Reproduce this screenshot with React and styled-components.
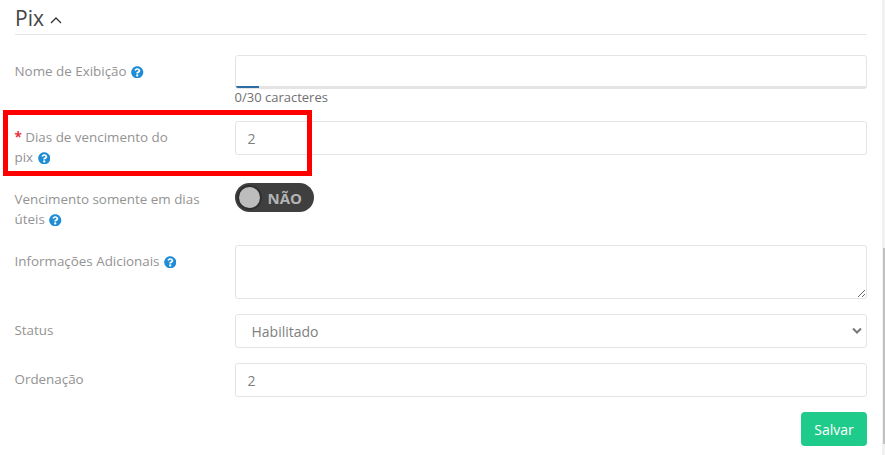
import React from 'react'
import styled, { createGlobalStyle } from 'styled-components'

const GlobalStyle = createGlobalStyle`
    html, body {
        margin: 0;
        padding: 0;
        background: #fff;
        overflow: hidden;
    }
    * {
        box-sizing: border-box;
    }
`

function HelpIcon() {
    return (
        <Help viewBox="0 0 512 512" aria-hidden="true">
            <path d="M504 256c0 137-111 248-248 248S8 393 8 256 119 8 256 8s248 111 248 248zM262.700 90c-54.500 0-89.300 23-116.500 63.800-3.500 5.300-2.400 12.400 2.700 16.300l34.700 26.300c5.200 3.900 12.600 3 16.700-2.100 17.900-22.700 30.100-35.800 57.300-35.800 20.400 0 45.700 13.100 45.700 32.900 0 15-12.400 22.700-32.500 34-23.500 13.200-54.600 29.600-54.600 70.600V300c0 6.600 5.400 12 12 12h56c6.600 0 12-5.400 12-12v-1.300c0-28.400 83-29.600 83-106.700 0-58-60.200-102-116.500-102zM256 338c-25.400 0-46 20.600-46 46 0 25.400 20.600 46 46 46s46-20.600 46-46c0-25.400-20.600-46-46-46z" />
        </Help>
    )
}

function App() {
    return (
        <Page>
            <GlobalStyle />
            <Panel>
                <Title>
                    Pix
                    <Chevron viewBox="0 0 12 8" aria-hidden="true">
                        <path d="M1 7L6 2l5 5" />
                    </Chevron>
                </Title>

                <Row>
                    <Label>Nome de Exibição <HelpIcon /></Label>
                    <Field>
                        <TextInput type="text" underlined />
                        <Counter>0/30 caracteres</Counter>
                    </Field>
                </Row>

                <Row gap={16}>
                    <Label><Star>*</Star> Dias de vencimento do<br />pix <HelpIcon /></Label>
                    <Field>
                        <TextInput type="text" defaultValue="2" />
                    </Field>
                </Row>

                <Row gap={16}>
                    <Label>Vencimento somente em dias<br />úteis <HelpIcon /></Label>
                    <Field>
                        <Toggle>
                            <Knob />
                            <ToggleText>NÃO</ToggleText>
                        </Toggle>
                    </Field>
                </Row>

                <Row gap={16}>
                    <Label>Informações Adicionais <HelpIcon /></Label>
                    <Field>
                        <TextArea />
                    </Field>
                </Row>

                <Row gap={15}>
                    <Label>Status</Label>
                    <Field>
                        <SelectWrap>
                            <SelectBox defaultValue="Habilitado">
                                <option>Habilitado</option>
                            </SelectBox>
                            <SelectArrow viewBox="0 0 10 7" aria-hidden="true">
                                <path d="M1 1.500l4 4 4-4" />
                            </SelectArrow>
                        </SelectWrap>
                    </Field>
                </Row>

                <Row gap={15}>
                    <Label>Ordenação</Label>
                    <Field>
                        <TextInput type="text" defaultValue="2" />
                    </Field>
                </Row>

                <Footer>
                    <SaveButton type="button">Salvar</SaveButton>
                </Footer>
            </Panel>

            <Highlight />
            <ScrollTrack>
                <ScrollThumb />
            </ScrollTrack>
        </Page>
    )
}

export default App

const Page = styled.div`
    position: relative;
    width: 885px;
    height: 455px;
    overflow: hidden;
    background: #fff;
    font-family: 'Open Sans', sans-serif;
    color: #888;
`
const Panel = styled.div`
    display: flex;
    flex-direction: column;
    padding: 0 18px 0 15px;
`
const Title = styled.div`
    display: flex;
    align-items: center;
    gap: 6px;
    height: 35px;
    padding-top: 2px;
    border-bottom: 1px solid #e6e6e6;
    font-size: 21px;
    color: #444;
`
const Chevron = styled.svg`
    width: 12px;
    height: 8px;
    margin-top: 3px;
    fill: none;
    stroke: #333;
    stroke-width: 1.3;
`
const Row = styled.div`
    display: flex;
    margin-top: ${({gap}) => gap ?? 20}px;
`
const Label = styled.div`
    width: 220px;
    flex: none;
    margin-left: -0.5px;
    padding-top: 6px;
    font-size: 13.4px;
    line-height: 20px;
    color: #939393;
`
const Help = styled.svg`
    display: inline-block;
    width: 12.500px;
    height: 12.500px;
    margin-left: 1px;
    vertical-align: -2px;
    fill: #1f8dd6;
`
const Star = styled.span`
    color: #e8313c;
    font-weight: 700;
`
const Field = styled.div`
    flex: 1;
    min-width: 0;
`
const TextInput = styled.input`
    display: block;
    width: 100%;
    height: 34px;
    padding: 0 16px 0 12px;
    border: 1px solid #e4e4e4;
    border-radius: 3px;
    outline: none;
    background: ${({underlined}) => underlined
        ? 'linear-gradient(#2e6da4, #2e6da4) left bottom / 23px 2px no-repeat, linear-gradient(#e4e4e4, #e4e4e4) left bottom / 100% 2px no-repeat, #fff'
        : '#fff'};
    font-family: inherit;
    font-size: 14px;
    color: #808080;
`
const Counter = styled.div`
    font-size: 13px;
    line-height: 16px;
    color: #707070;
`
const Toggle = styled.div`
    display: flex;
    align-items: center;
    width: 79px;
    height: 29px;
    padding: 0 4px;
    border-radius: 15px;
    background: #3f3f3f;
`
const Knob = styled.span`
    width: 21px;
    height: 21px;
    border-radius: 50%;
    background: #bdbdbd;
    box-shadow: 0 0 0 2px #2f2f2f;
`
const ToggleText = styled.span`
    margin-left: 8px;
    font-size: 15px;
    font-weight: 700;
    color: #b4b4b4;
`
const TextArea = styled.textarea`
    display: block;
    width: 100%;
    height: 54px;
    border: 1px solid #e4e4e4;
    border-radius: 3px;
    outline: none;
    background: #fff;
`
const SelectWrap = styled.div`
    position: relative;
`
const SelectBox = styled.select`
    display: block;
    width: 100%;
    height: 34px;
    padding: 0 16px;
    border: 1px solid #e4e4e4;
    border-radius: 3px;
    outline: none;
    appearance: none;
    background: #fff;
    font-family: inherit;
    font-size: 14px;
    color: #808080;
`
const SelectArrow = styled.svg`
    position: absolute;
    top: 13px;
    right: 5px;
    width: 10px;
    height: 7px;
    fill: none;
    stroke: #777;
    stroke-width: 2;
    pointer-events: none;
`
const Footer = styled.div`
    display: flex;
    justify-content: flex-end;
    margin-top: 15px;
`
const SaveButton = styled.button`
    width: 66px;
    height: 34px;
    border: none;
    border-radius: 4px;
    background: #1fcb8b;
    font-family: inherit;
    font-size: 14px;
    color: #fff;
`
const Highlight = styled.div`
    position: absolute;
    left: 3px;
    top: 110px;
    width: 309px;
    height: 66px;
    border: 5px solid #f00;
`
const ScrollTrack = styled.div`
    position: absolute;
    right: 0;
    top: 0;
    bottom: 0;
    width: 3px;
    background: #f1f1f1;
`
const ScrollThumb = styled.div`
    position: absolute;
    top: 248px;
    right: 0;
    width: 2px;
    height: 196px;
    background: #c1c1c1;
`
